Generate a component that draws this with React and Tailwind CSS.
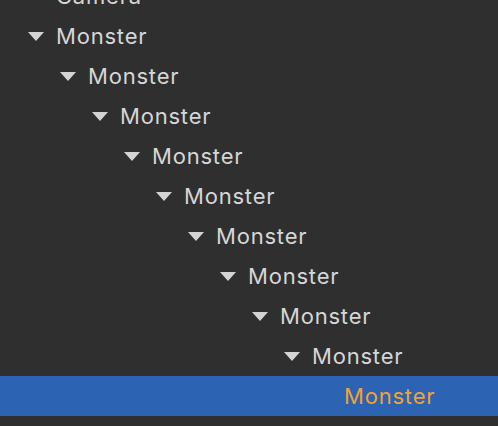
import React from "react";

function Row({ level, label, expandable, selected }) {
  return (
    <div
      className={`flex items-center h-10 shrink-0 ${selected ? "bg-[#2c63b3]" : ""}`}
      style={{ paddingLeft: 28 + level * 32 }}
    >
      <div className="w-[28px] shrink-0 flex items-center">
        {expandable && (
          <svg width="16" height="9" viewBox="0 0 16 9">
            <path d="M0 0 H16 L8 9 Z" fill="#d4d4d4" />
          </svg>
        )}
      </div>
      <span
        className={`text-[22px] tracking-[0.8px] leading-none whitespace-nowrap ${selected ? "text-[#f0a232]" : "text-[#d6d6d6]"}`}
      >
        {label}
      </span>
    </div>
  );
}

export default function App() {
  const rows = [{ level: 0, label: "Camera", expandable: false }];
  for (let i = 0; i < 9; i++) rows.push({ level: i, label: "Monster", expandable: true });
  rows.push({ level: 9, label: "Monster", expandable: false, selected: true });

  return (
    <div
      className="w-[498px] h-[426px] bg-[#2f2f2f] overflow-hidden"
      style={{ fontFamily: "Inter, 'Liberation Sans', sans-serif" }}
    >
      <div className="flex flex-col -mt-6">
        {rows.map((r, i) => (
          <Row key={i} {...r} />
        ))}
      </div>
    </div>
  );
}
